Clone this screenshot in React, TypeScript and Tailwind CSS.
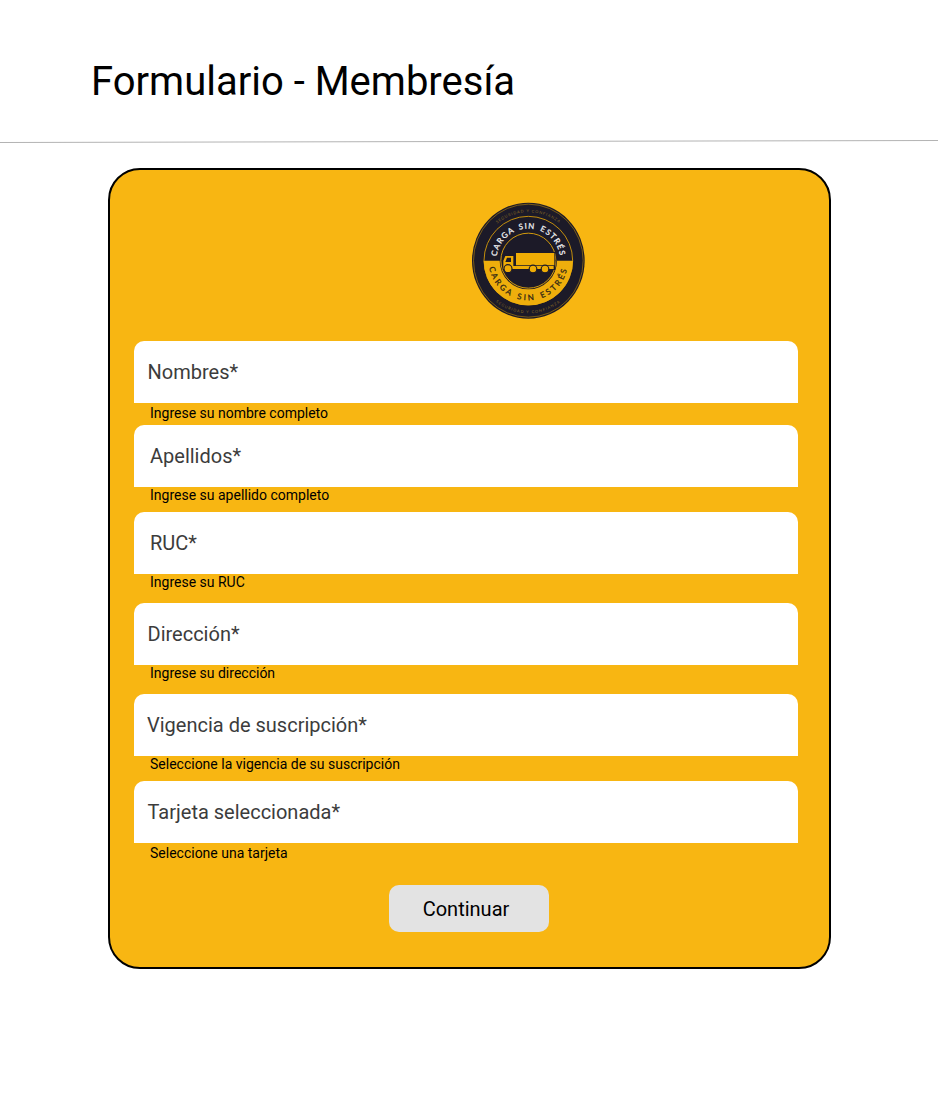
type Field = { label: string; hint: string; box: string; labelBox: string; hintBox: string };

const fields: Field[] = [
  { label: 'Nombres*', hint: 'Ingrese su nombre completo', box: 'h-[84px]', labelBox: 'pl-[13.5px]', hintBox: 'pt-0.5' },
  { label: 'Apellidos*', hint: 'Ingrese su apellido completo', box: 'h-[87px]', labelBox: 'pl-4', hintBox: '' },
  { label: 'RUC*', hint: 'Ingrese su RUC', box: 'h-[91px]', labelBox: 'pl-4', hintBox: '' },
  { label: 'Dirección*', hint: 'Ingrese su dirección', box: 'h-[91px]', labelBox: 'pl-[13.5px]', hintBox: '' },
  { label: 'Vigencia de suscripción*', hint: 'Seleccione la vigencia de su suscripción', box: 'h-[87px]', labelBox: 'pl-[13px]', hintBox: '' },
  { label: 'Tarjeta seleccionada*', hint: 'Seleccione una tarjeta', box: 'h-[104px]', labelBox: 'pl-[13.5px]', hintBox: 'pt-0.5' },
];

function Logo() {
  return (
    <svg
      viewBox="0 0 390 390"
      className="h-[130px] w-[130px] font-['Lato',sans-serif]"
      role="img"
      aria-label="Carga sin estrés"
    >
      <defs>
        <path id="top-outer" d="M47 194a146 145 0 0 1 292 0" />
        <path id="top-inner" d="M97 194a96 96 0 0 1 192 0" />
        <path id="bottom-inner" d="M74 194a119 119 0 0 0 238 0" />
        <path id="bottom-outer" d="M37 194a156 158 0 0 0 312 0" />
      </defs>
      <ellipse cx="193" cy="194" rx="169" ry="174" fill="#1c1a28" />
      <ellipse cx="193" cy="194" rx="164.500" ry="169.500" fill="none" stroke="#a77b12" strokeWidth="2" />
      <circle cx="193" cy="194" r="133" fill="none" stroke="#c18d0d" strokeWidth="3" />
      <path d="M59 194a134 134 0 0 0 268 0z" fill="#eeae0c" />
      <circle cx="193" cy="194" r="86" fill="#1c1a28" />
      <circle cx="193" cy="194" r="82.500" fill="none" stroke="#d39a0c" strokeWidth="3" />
      <path d="M116 178h34v-10h124v54H116z" fill="#1c1a28" />
      <g fill="#efad05">
        <path d="M156 171h115v37H156z" />
        <path d="M124 180h24v30h121v9H118v-25z" />
      </g>
      <path d="M129 185h12v13h-17z" fill="#1c1a28" />
      <g fill="#efad05" stroke="#1c1a28" strokeWidth="3.500">
        <circle cx="132" cy="218" r="12" />
        <circle cx="207" cy="219" r="11.500" />
        <circle cx="243" cy="219" r="11.500" />
      </g>
      <g textAnchor="middle">
        <text fill="#f0f0f2" stroke="#f0f0f2" strokeWidth=".8" fontSize="23.500" letterSpacing="3.700" wordSpacing="4">
          <textPath href="#top-inner" startOffset="50%">CARGA SIN ESTRÉS</textPath>
        </text>
        <text fill="#302715" stroke="#302715" strokeWidth=".8" fontSize="24" letterSpacing="7.100" wordSpacing="3">
          <textPath href="#bottom-inner" startOffset="50%">CARGA SIN ESTRÉS</textPath>
        </text>
        <text fill="#8a6a24" fontSize="11.500" letterSpacing="2.800">
          <textPath href="#top-outer" startOffset="50%">SEGURIDAD Y CONFIANZA</textPath>
        </text>
        <text fill="#8a6a24" fontSize="11.500" letterSpacing="3.200">
          <textPath href="#bottom-outer" startOffset="50%">SEGURIDAD Y CONFIANZA</textPath>
        </text>
      </g>
    </svg>
  );
}

export default function App() {
  return (
    <main className="min-h-[1093px] w-[938px] bg-white font-['Roboto',sans-serif] text-black">
      <header className="h-[140px] pt-[58px] pl-[91px]">
        <h1 className="text-[40px] leading-[48px] whitespace-nowrap">Formulario - Membresía</h1>
      </header>
      <svg className="block h-[3px] w-[938px]" viewBox="0 0 938 3" aria-hidden="true">
        <path d="M0 2.500L938 .5" stroke="#b3b3b3" />
      </svg>
      <form
        className="mt-[25px] ml-[108px] h-[801px] w-[723px] rounded-[32px] border-2 border-black bg-[#f8b612] pt-[26px] pl-6"
        onSubmit={(event) => event.preventDefault()}
      >
        <div className="h-[145px] pl-[330px]">
          <Logo />
        </div>
        {fields.map((field) => (
          <div key={field.label} className={field.box}>
            <div
              className={`flex h-[62px] w-[664px] items-center rounded-t-[10px] bg-white text-[20px] leading-6 text-[#3c3c3c] ${field.labelBox}`}
            >
              {field.label}
            </div>
            <p className={`pl-4 text-[14px] leading-4 ${field.hintBox}`}>{field.hint}</p>
          </div>
        ))}
        <button className="ml-[255px] flex h-[47px] w-[160px] items-center justify-center rounded-[10px] bg-[#e3e3e3] pr-1.5 text-[20px] leading-6">
          Continuar
        </button>
      </form>
    </main>
  );
}
